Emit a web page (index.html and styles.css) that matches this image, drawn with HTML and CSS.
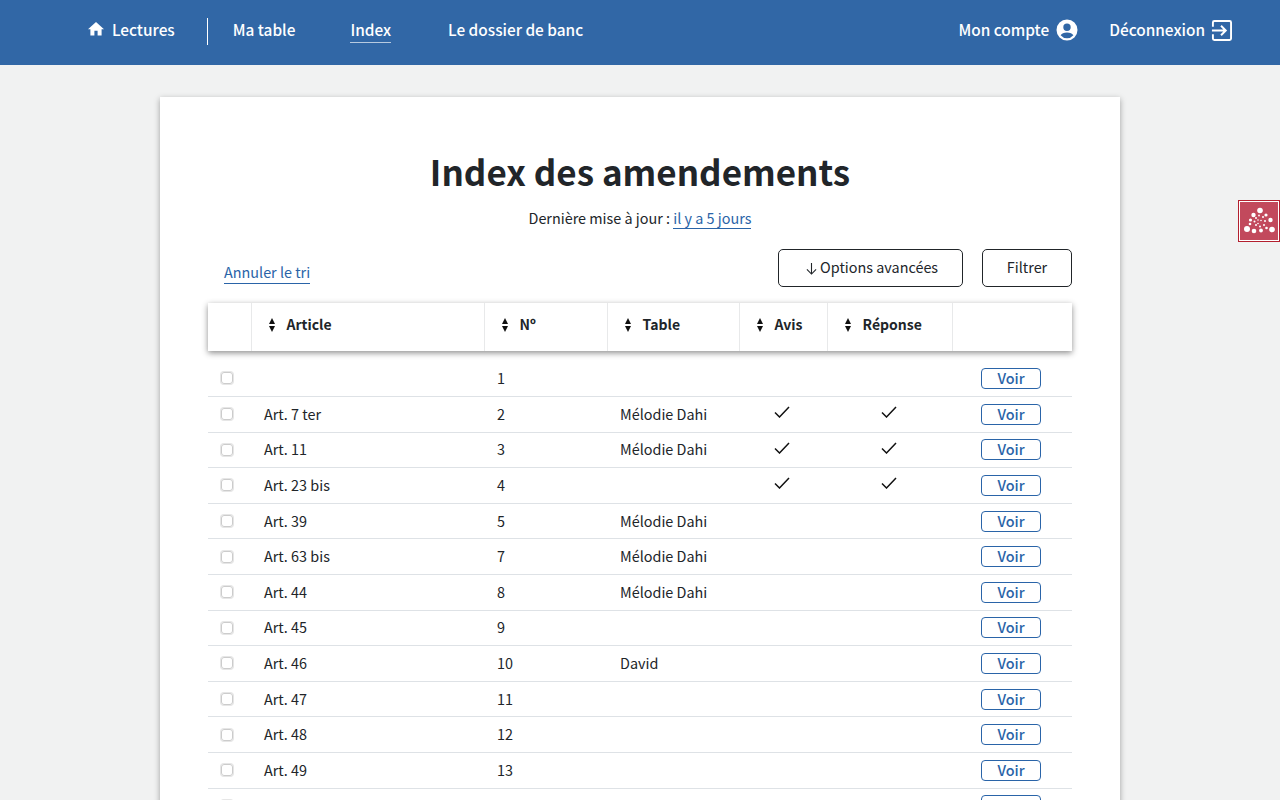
FILE: index.html
```html
<!DOCTYPE html>
<html lang="fr">

<head>
    <meta charset="UTF-8">
    <meta name="viewport" content="width=device-width, initial-scale=1.0">
    <title>Index des amendements</title>
    <link rel="stylesheet" href="styles.css">
</head>

<body>
    <header class="topbar">
        <nav class="nav-main">
            <a class="nav-link nav-home" href="#">
                <svg class="icon-home" viewBox="0 0 16 14" width="16" height="14"><path fill="#fff" d="M8 0 L16 7.2 H13.6 V13.6 H9.6 V8.8 H6.4 V13.6 H2.4 V7.2 H0 Z"/></svg>
                Lectures
            </a>
            <a class="nav-link nav-table" href="#">Ma table</a>
            <a class="nav-link nav-active" href="#">Index</a>
            <a class="nav-link" href="#">Le dossier de banc</a>
        </nav>
        <nav class="nav-user">
            <a class="nav-link" href="#">
                Mon compte
                <svg viewBox="0 0 22 22" width="22" height="22"><path fill="#fff" fill-rule="evenodd" d="M11 .5a10.500 10.500 0 1 0 0 21 10.500 10.500 0 0 0 0-21zM11 4.600a3.700 3.700 0 1 1 0 7.400 3.700 3.700 0 0 1 0-7.400zM11 19.200a8.300 8.300 0 0 1-6.400-3c.8-1.600 3.400-2.800 6.400-2.800s5.600 1.200 6.400 2.800a8.300 8.300 0 0 1-6.400 3z"/></svg>
            </a>
            <a class="nav-link nav-logout" href="#">
                Déconnexion
                <svg viewBox="0 0 22 22" width="21" height="21" fill="none" stroke="#fff" stroke-width="2"><path d="M2 7 V2.500 A1.500 1.500 0 0 1 3.500 1 H19.500 A1.500 1.500 0 0 1 21 2.500 V19.500 A1.500 1.500 0 0 1 19.500 21 H3.500 A1.500 1.500 0 0 1 2 19.500 V15"/><path d="M1 11 H15 M10.500 6 L15.500 11 L10.500 16"/></svg>
            </a>
        </nav>
    </header>

    <a class="side-badge" href="#">
        <svg viewBox="0 0 32 32" width="32" height="32" fill="#fff">
            <circle cx="17" cy="5.500" r="2.800"/><circle cx="10.500" cy="10" r="2.200"/><circle cx="23" cy="10" r="1.600"/>
            <circle cx="7.500" cy="15" r="1.600"/><circle cx="27.500" cy="15" r="2.200"/><circle cx="7" cy="19" r="1.300"/>
            <circle cx="4" cy="24" r="3"/><circle cx="11" cy="26" r="2.300"/><circle cx="18" cy="25.500" r="1.900"/>
            <circle cx="23.500" cy="23" r="1.300"/><circle cx="29" cy="24.500" r="2.800"/>
            <circle cx="13" cy="13" r="1"/><circle cx="16" cy="10.500" r=".9"/><circle cx="20" cy="12" r="1"/>
            <circle cx="22" cy="16" r="1"/><circle cx="21" cy="20" r="1"/><circle cx="17" cy="21.500" r="1"/>
            <circle cx="13" cy="20" r="1"/><circle cx="11.500" cy="16.500" r="1"/><circle cx="15" cy="15" r=".8"/>
            <circle cx="18" cy="15.500" r=".8"/><circle cx="15" cy="18.500" r=".8"/>
        </svg>
    </a>

    <main class="card">
        <h1>Index des amendements</h1>
        <p class="updated">Dernière mise à jour : <a class="link" href="#">il y a 5 jours</a></p>

        <div class="actions">
            <a class="link" href="#">Annuler le tri</a>
            <div class="actions-right">
                <button class="btn btn-options">
                    <svg viewBox="0 0 12 13" width="11" height="12" fill="none" stroke="#212529" stroke-width="1.200"><path d="M6 0 V12 M1 7 L6 12 L11 7"/></svg>
                    Options avancées
                </button>
                <button class="btn btn-filter">Filtrer</button>
            </div>
        </div>

        <table>
            <colgroup>
                <col class="c-check"><col class="c-article"><col class="c-num">
                <col class="c-table"><col class="c-avis"><col class="c-rep"><col class="c-voir">
            </colgroup>
            <thead>
                <tr>
                    <th></th>
                    <th><span class="sort"></span>Article</th>
                    <th><span class="sort"></span>Nº</th>
                    <th><span class="sort"></span>Table</th>
                    <th><span class="sort"></span>Avis</th>
                    <th><span class="sort"></span>Réponse</th>
                    <th></th>
                </tr>
            </thead>
            <tbody id="rows"></tbody>
        </table>
    </main>

    <script>
        let rows = [
            ['', '1', '', 0],
            ['Art. 7 ter', '2', 'Mélodie Dahi', 1],
            ['Art. 11', '3', 'Mélodie Dahi', 1],
            ['Art. 23 bis', '4', '', 1],
            ['Art. 39', '5', 'Mélodie Dahi', 0],
            ['Art. 63 bis', '7', 'Mélodie Dahi', 0],
            ['Art. 44', '8', 'Mélodie Dahi', 0],
            ['Art. 45', '9', '', 0],
            ['Art. 46', '10', 'David', 0],
            ['Art. 47', '11', '', 0],
            ['Art. 48', '12', '', 0],
            ['Art. 49', '13', '', 0],
            ['Art. 50', '14', '', 0]
        ];
        let check = '<svg class="check" viewBox="0 0 16 12" width="16" height="12"><path d="M1 6.500 L5.500 11 L15 1" fill="none" stroke="#111" stroke-width="1.500"/></svg>';
        let html = '';
        for (let i = 0; i < rows.length; i++) {
            let r = rows[i];
            html += '<tr><td><span class="box"></span></td><td>' + r[0] + '</td><td>' + r[1] + '</td><td>' + r[2] + '</td>'
                + '<td class="mid">' + (r[3] ? check : '') + '</td><td class="mid">' + (r[3] ? check : '') + '</td>'
                + '<td><a class="voir" href="#">Voir</a></td></tr>';
        }
        document.querySelector('#rows').innerHTML = html;
    </script>
</body>

</html>
```

FILE: styles.css
```css
html,
body {
    margin: 0;
    padding: 0;
    height: 800px;
    overflow: hidden;
    background-color: #f1f2f2;
}

body {
    font-family: "Noto Sans CJK SC", "Noto Sans", sans-serif;
    font-size: 14.4px;
    line-height: 24px;
    color: #212529;
}

a {
    text-decoration: none;
}

.topbar {
    height: 65px;
    background-color: #3167a6;
    display: flex;
    justify-content: space-between;
    align-items: center;
    padding: 0 48px 7px 88px;
    box-sizing: border-box;
}

.nav-main,
.nav-user {
    display: flex;
    align-items: center;
}

.nav-link {
    color: #fff;
    font-size: 15.4px;
    font-weight: 500;
    display: flex;
    align-items: center;
    white-space: nowrap;
}

.nav-home {
    box-sizing: border-box;
    border-right: 1px solid #fff;
    height: 27px;
    padding: 0 32px 4px 0;
    margin: 4px 25px 0 0;
}

.icon-home {
    margin-right: 8px;
    margin-top: -1px;
}

.nav-table {
    margin-right: 55px;
}

.nav-active {
    margin-right: 57px;
    height: 25px;
    margin-top: 2px;
    border-bottom: 1px solid #b7cae0;
    line-height: 23px;
}

.nav-user .nav-link svg {
    margin-left: 7px;
    margin-top: 2px;
}

.nav-user .nav-link.nav-logout svg {
    margin-left: 6px;
}

.nav-user .nav-link:first-child {
    margin-right: 31px;
}

.side-badge {
    position: absolute;
    right: 0;
    top: 200px;
    width: 42px;
    height: 42px;
    box-sizing: border-box;
    background-color: #c2495c;
    border: 1px solid #b3202f;
    outline: 1px solid #fff;
    outline-offset: -2px;
    display: flex;
    align-items: center;
    justify-content: center;
}

.card {
    width: 960px;
    margin: 32px auto 0;
    padding: 46px 48px 0;
    box-sizing: border-box;
    background-color: #fff;
    box-shadow: 0 2px 6px rgba(0, 0, 0, 0.35);
}

h1 {
    margin: 0;
    font-size: 35px;
    line-height: 56px;
    font-weight: 700;
    text-align: center;
}

.updated {
    margin: 7px 0 0;
    text-align: center;
}

.link {
    color: #2a64a8;
    border-bottom: 1px solid #2a64a8;
}

.actions {
    display: flex;
    justify-content: space-between;
    align-items: flex-end;
    margin-top: 19px;
    padding-left: 16px;
    height: 38px;
}

.actions > .link {
    line-height: 20px;
    padding-bottom: 1px;
    margin-bottom: 3px;
}

.actions-right {
    display: flex;
    gap: 19px;
}

.btn {
    height: 38px;
    box-sizing: border-box;
    background-color: #fff;
    border: 1px solid #212529;
    border-radius: 5px;
    font: inherit;
    color: #212529;
    padding: 0 0 2px;
}

.btn svg {
    vertical-align: -2px;
}

.btn-options {
    width: 185px;
    padding-left: 3px;
}

.btn-filter {
    width: 90px;
}

table {
    width: 864px;
    margin-top: 16px;
    border-collapse: separate;
    border-spacing: 0;
    table-layout: fixed;
}

.c-check { width: 43px; }
.c-article { width: 233px; }
.c-num { width: 123px; }
.c-table { width: 132px; }
.c-avis { width: 88px; }
.c-rep { width: 125px; }
.c-voir { width: 120px; }

thead tr {
    box-shadow: 0 2px 6px rgba(0, 0, 0, 0.45);
}

th {
    height: 48px;
    padding: 0 0 6px 16px;
    box-sizing: border-box;
    background-color: #fff;
    border-left: 1px solid #e8e9ea;
    text-align: left;
    font-weight: 700;
    font-size: 14px;
    white-space: nowrap;
}

th:first-child {
    border-left: 0;
}

.sort {
    display: inline-block;
    vertical-align: middle;
    position: relative;
    width: 7px;
    height: 14px;
    margin-left: 1px;
    margin-right: 10.5px;
    margin-top: -2px;
}

.sort::before,
.sort::after {
    content: "";
    position: absolute;
    left: 0;
    border-left: 3.5px solid transparent;
    border-right: 3.5px solid transparent;
}

.sort::before {
    top: 0;
    border-bottom: 6.5px solid #111;
}

.sort::after {
    bottom: 0;
    border-top: 6.5px solid #111;
}

tbody tr:first-child td {
    height: 46px;
    padding-top: 9px;
}

td {
    height: 35.6px;
    padding: 0 0 1px 13px;
    box-sizing: border-box;
    border-bottom: 1px solid #dee2e6;
    white-space: nowrap;
}

td:first-child {
    padding: 0 0 0 13px;
}

td.mid {
    padding: 0 2px 0 0;
}

td:last-child {
    padding: 0 0 0 29px;
}

.box {
    display: block;
    width: 10px;
    height: 10px;
    border: 1px solid #cccccc;
    box-shadow: 0 0 0 1px #e6e6e6;
    border-radius: 3px;
}

.check {
    display: block;
    margin: -4px auto 0;
}

.voir {
    display: block;
    width: 60px;
    height: 21px;
    box-sizing: border-box;
    border: 1px solid #2a64a8;
    border-radius: 4px;
    color: #2a64a8;
    font-weight: 500;
    text-align: center;
    line-height: 18px;
}
```
